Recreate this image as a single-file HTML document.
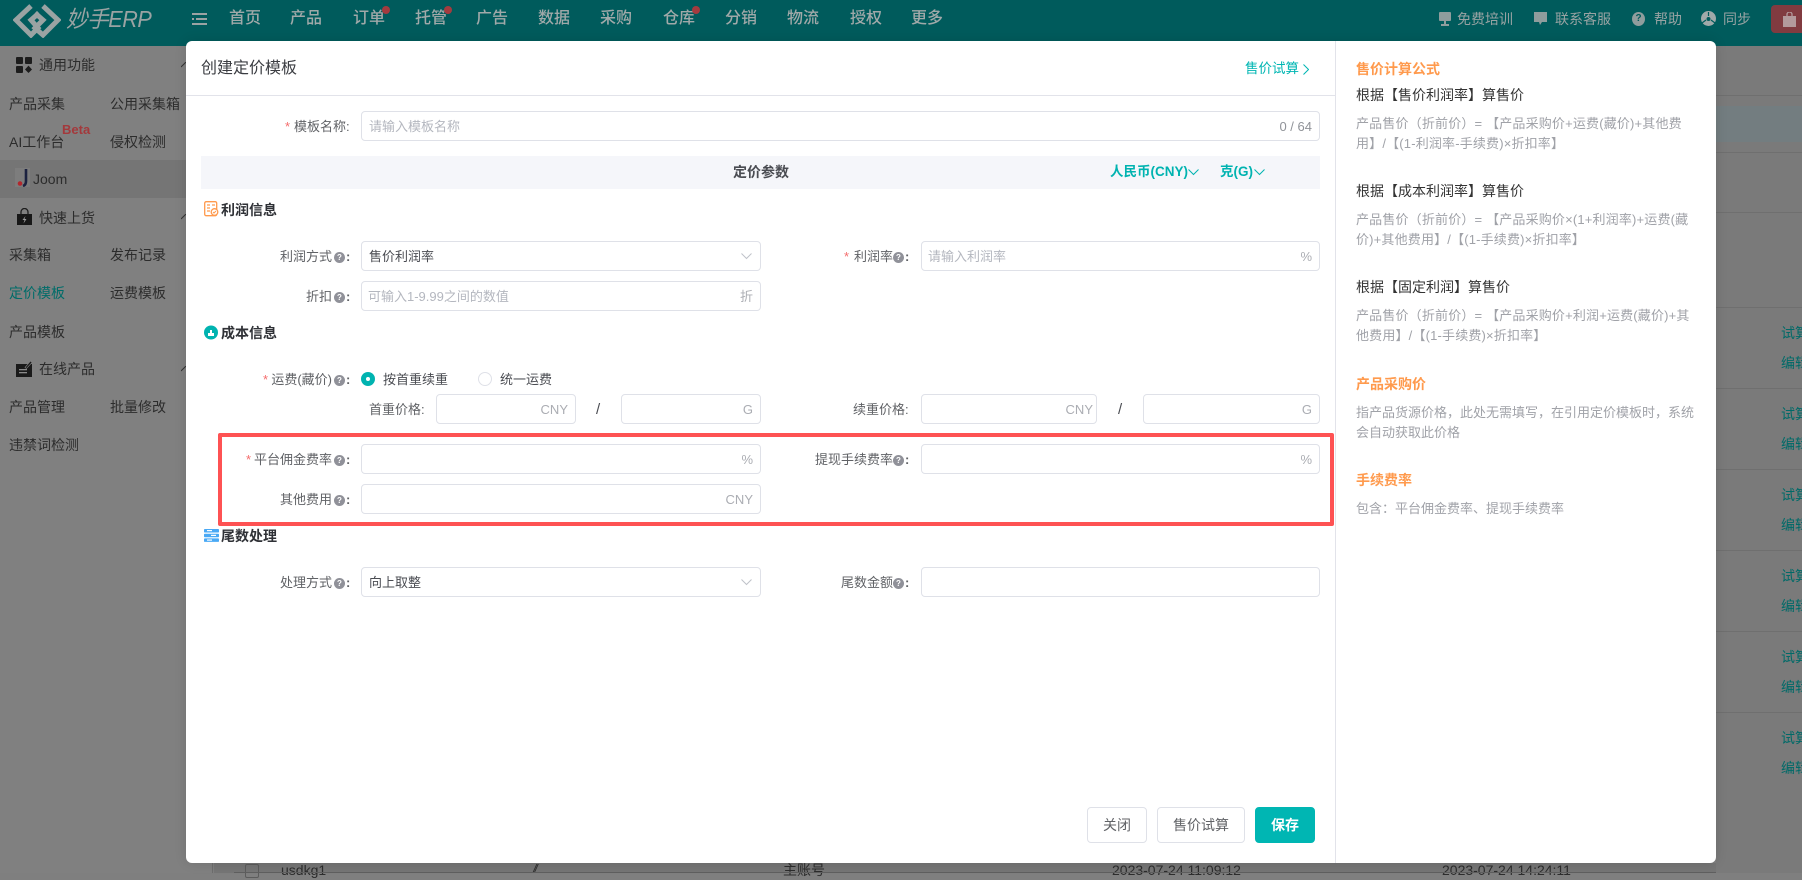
<!DOCTYPE html>
<html lang="zh-CN"><head><meta charset="utf-8"><title>创建定价模板</title>
<style>
*{box-sizing:border-box}
html,body{margin:0;padding:0}
body{width:1802px;height:873px;position:relative;overflow:hidden;background:#7f7f7f;font-family:"Liberation Sans","Noto Sans CJK SC",sans-serif;font-size:13px;color:#2b2b2b}
.a{position:absolute}
.t{position:absolute;white-space:nowrap;line-height:20px}
.nav{font-size:16px;font-weight:500;color:#a0a9a9;top:9px}
.top{font-size:14px;color:#98a3a3;top:9px}
.dot{position:absolute;width:8px;height:8px;border-radius:50%;background:#a33b3f;top:6px}
.s{font-size:14px;color:#2c2c2c}
.act{font-size:14px;color:#006a68;left:1781px}
.hl{position:absolute;height:1px;background:#6f6f6f;left:1716px;width:86px}
.lab{font-size:13px;color:#606266;margin-top:1px}
.q{position:absolute;width:11px;height:11px;border-radius:50%;background:#909199;color:#fff;font-size:8px;font-weight:bold;line-height:11px;text-align:center;margin-top:1px}
.c{position:absolute;font-size:13px;color:#606266;line-height:20px;margin-top:1px;font-weight:bold}
.star{position:absolute;color:#f56c6c;font-size:13px;line-height:20px;margin-top:1px}
.in{position:absolute;background:#fff;border:1px solid #dfe1e8;border-radius:4px;height:30px}
.ph{position:absolute;white-space:nowrap;font-size:13px;line-height:20px;color:#b4b7bf;margin-top:1px}
.su{position:absolute;white-space:nowrap;font-size:13px;line-height:20px;color:#abadb3;margin-top:1px}
.val{position:absolute;white-space:nowrap;font-size:13px;line-height:20px;color:#4a4c52;margin-top:1px}
.sec{position:absolute;font-size:14px;font-weight:bold;color:#2f3136;line-height:20px;left:221px;white-space:nowrap;margin-top:1px}
.h1{position:absolute;left:1356px;font-size:14px;font-weight:bold;color:#ff9a4d;line-height:20px;white-space:nowrap}
.h2{position:absolute;left:1356px;font-size:14px;color:#333;line-height:20px;white-space:nowrap}
.p{position:absolute;left:1356px;font-size:13px;color:#a0a2a8;line-height:20px;white-space:nowrap;margin-top:1px}
.f{letter-spacing:.17px}
.btn{position:absolute;top:807px;height:36px;border:1px solid #dfe1e8;border-radius:4px;background:#fff;color:#606266;font-size:14px;line-height:34px;text-align:center}
.sl{font-size:15px;color:#4a4c52}
</style></head>
<body>
<!-- top bar -->
<div class="a" style="left:0;top:0;width:1802px;height:46px;background:#005b5c"></div>
<svg class="a" style="left:13px;top:2px" width="48" height="36" viewBox="0 0 48 36" fill="none" stroke="#9aa3a3" stroke-width="5"><path d="M18 4 3 18l15 15 7-7-7-8 8-7M30 4l15 14-15 15-8-7 8-8-8-7"/></svg>
<div class="t" style="left:66px;top:5px;font-size:23px;line-height:28px;font-style:italic;color:#9aa3a3;letter-spacing:-.5px;transform:scaleX(.94);transform-origin:left center">妙手ERP</div>
<svg class="a" style="left:192px;top:13px" width="15" height="12" viewBox="0 0 15 12" fill="#9aa3a3"><rect width="15" height="2"/><rect y="5" x="4" width="11" height="2"/><rect y="10" width="15" height="2"/><rect y="5" width="2" height="2"/></svg>
<div class="t nav" style="left:229px">首页</div>
<div class="t nav" style="left:290px">产品</div>
<div class="t nav" style="left:353px">订单</div><div class="dot" style="left:382px"></div>
<div class="t nav" style="left:415px">托管</div><div class="dot" style="left:444px"></div>
<div class="t nav" style="left:476px">广告</div>
<div class="t nav" style="left:538px">数据</div>
<div class="t nav" style="left:600px">采购</div>
<div class="t nav" style="left:663px">仓库</div><div class="dot" style="left:692px"></div>
<div class="t nav" style="left:725px">分销</div>
<div class="t nav" style="left:787px">物流</div>
<div class="t nav" style="left:850px">授权</div>
<div class="t nav" style="left:911px">更多</div>
<svg class="a" style="left:1438px;top:12px" width="14" height="14" viewBox="0 0 14 14" fill="#8f9d9d"><rect x="1" y="0" width="12" height="9" rx="1"/><rect x="6" y="9" width="2" height="3"/><rect x="3" y="12" width="8" height="2"/></svg>
<div class="t top" style="left:1457px">免费培训</div>
<svg class="a" style="left:1533px;top:11px" width="15" height="15" viewBox="0 0 15 15" fill="#8f9d9d"><path d="M1 1h13v10H9l-2 3-1-3H1z"/></svg>
<div class="t top" style="left:1555px">联系客服</div>
<div class="a" style="left:1632px;top:12px;width:13px;height:14px;border-radius:50%;background:#8f9d9d;color:#005b5c;font-size:10px;font-weight:bold;text-align:center;line-height:14px">?</div>
<div class="t top" style="left:1654px">帮助</div>
<svg class="a" style="left:1701px;top:11px" width="15" height="15" viewBox="0 0 15 15"><circle cx="7.5" cy="7.5" r="7.5" fill="#a0a9a9"/><circle cx="7.5" cy="8" r="2" fill="#005b5c"/><path d="M1 12 5 9M14 12l-4-3M7.5 1v4" stroke="#005b5c" stroke-width="1.2"/></svg>
<div class="t top" style="left:1723px">同步</div>
<div class="a" style="left:1771px;top:5px;width:40px;height:28px;border-radius:4px;background:#813b40"></div>
<svg class="a" style="left:1783px;top:12px" width="13" height="15" viewBox="0 0 13 15"><rect y="4" width="13" height="11" fill="#b39a9c"/><path d="M4 5V2.5a2.5 2.5 0 0 1 5 0V5" fill="none" stroke="#b39a9c" stroke-width="1.3"/></svg>

<!-- sidebar -->
<div class="a" style="left:0;top:46px;width:213px;height:827px;background:#808080;border-right:1px solid #6d6d6d"></div>
<div class="a" style="left:0;top:160px;width:186px;height:38px;background:#757575"></div>
<svg class="a" style="left:16px;top:57px" width="16" height="16" viewBox="0 0 16 16" fill="#1d1d1d"><rect width="7" height="7" rx="1"/><rect x="9" width="7" height="7" rx="1"/><rect y="9" width="7" height="7" rx="1"/><path d="M12.5 8.6 16 12.5l-3.500 3.500-3.500-3.500z"/></svg>
<div class="t s" style="left:39px;top:55px">通用功能</div>
<div class="t s" style="left:9px;top:94px">产品采集</div>
<div class="t s" style="left:110px;top:94px">公用采集箱</div>
<div class="t s" style="left:9px;top:132px">AI工作台</div>
<div class="t" style="left:62px;top:120px;font-size:13px;font-weight:bold;color:#a3393c">Beta</div>
<div class="t s" style="left:110px;top:132px">侵权检测</div>
<svg class="a" style="left:15px;top:168px" width="15" height="19" viewBox="0 0 15 19"><rect width="15" height="19" fill="#7d7d7d"/><path d="M11 1v12q0 4-3 5" fill="none" stroke="#1c2240" stroke-width="2.600"/><circle cx="5" cy="15.500" r="2.300" fill="#b3272d"/></svg>
<div class="t s" style="left:33px;top:169px">Joom</div>
<svg class="a" style="left:17px;top:208px" width="15" height="17" viewBox="0 0 15 17"><rect y="6" width="15" height="11" fill="#181818"/><path d="M4 7V4a3.500 3.500 0 0 1 7 0v3" fill="none" stroke="#1d1d1d" stroke-width="1.300"/><path d="M8.500 8 5.500 12h2l-1 3.500 3-4.500h-2z" fill="#9a9a9a"/></svg>
<div class="t s" style="left:39px;top:208px">快速上货</div>
<div class="t s" style="left:9px;top:245px">采集箱</div>
<div class="t s" style="left:110px;top:245px">发布记录</div>
<div class="t s" style="left:9px;top:283px;color:#006c69">定价模板</div>
<div class="t s" style="left:110px;top:283px">运费模板</div>
<div class="t s" style="left:9px;top:322px">产品模板</div>
<svg class="a" style="left:16px;top:361px" width="16" height="16" viewBox="0 0 16 16"><path d="M0 3h10L7 7v2H0zM0 3h16v13H0z" fill="#1a1a1a"/><rect x="3" y="8" width="8" height="1.300" fill="#8a8a8a"/><rect x="3" y="11" width="8" height="1.300" fill="#8a8a8a"/><path d="M9 6.500 14.500 0 16 1.500 10.500 7.500z" fill="#1a1a1a" stroke="#808080" stroke-width=".6"/></svg>
<div class="t s" style="left:39px;top:359px">在线产品</div>
<div class="t s" style="left:9px;top:397px">产品管理</div>
<div class="t s" style="left:110px;top:397px">批量修改</div>
<div class="t s" style="left:9px;top:435px">违禁词检测</div>
<svg class="a" style="left:181px;top:62px" width="5" height="6"><path d="M0 5 5 0" stroke="#333" fill="none"/></svg>
<svg class="a" style="left:181px;top:214px" width="5" height="6"><path d="M0 5 5 0" stroke="#333" fill="none"/></svg>
<svg class="a" style="left:181px;top:366px" width="5" height="6"><path d="M0 5 5 0" stroke="#333" fill="none"/></svg>

<!-- background page right -->
<div class="a" style="left:1716px;top:46px;width:86px;height:827px;background:#7a7a7a"></div>
<div class="a" style="left:1716px;top:106px;width:86px;height:36px;background:#737d80"></div>
<div class="hl" style="top:95px"></div><div class="hl" style="top:152px"></div><div class="hl" style="top:212px"></div>
<div class="hl" style="top:307px"></div><div class="hl" style="top:388px"></div><div class="hl" style="top:469px"></div><div class="hl" style="top:550px"></div><div class="hl" style="top:631px"></div><div class="hl" style="top:712px"></div>
<div class="t act" style="top:323px">试算</div><div class="t act" style="top:353px">编辑</div>
<div class="t act" style="top:404px">试算</div><div class="t act" style="top:434px">编辑</div>
<div class="t act" style="top:485px">试算</div><div class="t act" style="top:515px">编辑</div>
<div class="t act" style="top:566px">试算</div><div class="t act" style="top:596px">编辑</div>
<div class="t act" style="top:647px">试算</div><div class="t act" style="top:677px">编辑</div>
<div class="t act" style="top:728px">试算</div><div class="t act" style="top:758px">编辑</div>

<!-- bottom strip -->
<div class="a" style="left:214px;top:863px;width:1502px;height:10px;background:#757575"></div>
<div class="a" style="left:245px;top:864px;width:14px;height:14px;border:1px solid #5c5c5c;border-radius:2px"></div>
<div class="t" style="left:281px;top:860px;font-size:14px;color:#2c2c2c">usdkg1</div>
<div class="t" style="left:533px;top:859px;font-size:12px;font-style:italic;letter-spacing:-2px;color:#2c2c2c">//</div>
<div class="t" style="left:783px;top:860px;font-size:14px;color:#2c2c2c">主账号</div>
<div class="t" style="left:1112px;top:860px;font-size:14px;color:#2c2c2c">2023-07-24 11:09:12</div>
<div class="t" style="left:1442px;top:860px;font-size:14px;color:#2c2c2c">2023-07-24 14:24:11</div>
<div class="a" style="left:234px;top:872px;width:1482px;height:1px;background:#5f5f5f"></div>

<!-- modal -->
<div class="a" style="left:186px;top:41px;width:1530px;height:822px;background:#fff;border-radius:6px;box-shadow:0 0 12px rgba(0,0,0,.12)"></div>
<div class="a" style="left:186px;top:95px;width:1149px;height:1px;background:#e2e3ea"></div>
<div class="a" style="left:1335px;top:41px;width:1px;height:822px;background:#e2e3ea"></div>
<div class="t" style="left:201px;top:59px;font-size:16px;color:#3b3d42">创建定价模板</div>
<div class="t" style="left:1245px;top:59px;font-size:13.500px;color:#00b6b3">售价试算</div>
<svg class="a" style="left:1303px;top:64px" width="6" height="11"><path d="M.5 .5l5 5-5 5" fill="none" stroke="#00b6b3"/></svg>

<!-- name row -->
<div class="star" style="left:285px;top:116px">*</div>
<div class="t lab" style="left:294px;top:116px">模板名称:</div>
<div class="in" style="left:361px;top:111px;width:959px"></div>
<div class="ph" style="left:369px;top:116px">请输入模板名称</div>
<div class="su" style="right:490px;top:116px;color:#909399">0 / 64</div>

<!-- band -->
<div class="a" style="left:201px;top:156px;width:1119px;height:33px;background:#f5f6fa"></div>
<div class="t" style="left:733px;top:162px;font-size:14px;font-weight:bold;color:#4a4c52">定价参数</div>
<div class="t" style="left:1110px;top:162px;font-size:13.500px;font-weight:bold;color:#00b3b0">人民币(CNY)</div>
<svg class="a" style="left:1188px;top:169px" width="11" height="7"><path d="M.5 .5 5.500 5.500 10.500 .5" fill="none" stroke="#00b3b0"/></svg>
<div class="t" style="left:1220px;top:162px;font-size:13.500px;font-weight:bold;color:#00b3b0">克(G)</div>
<svg class="a" style="left:1254px;top:169px" width="11" height="7"><path d="M.5 .5 5.500 5.500 10.500 .5" fill="none" stroke="#00b3b0"/></svg>

<!-- profit section -->
<svg class="a" style="left:204px;top:201px" width="15" height="16" viewBox="0 0 15 16" fill="none" stroke="#ff9a4d" stroke-width="1.300"><rect x=".7" y=".7" width="12" height="14" rx="1.500"/><path d="M3 4h3M8 4h3M3 7h3M3 10h3"/><circle cx="10.500" cy="11" r="3.300" fill="#fff"/><path d="M9 11l1 1 2-2" stroke-width="1"/></svg>
<div class="sec" style="top:199px">利润信息</div>

<div class="t lab" style="right:1470px;top:246px">利润方式</div><div class="q" style="left:334px;top:251px">?</div><div class="c" style="left:346px;top:246px">:</div>
<div class="in" style="left:361px;top:241px;width:400px"></div>
<div class="val" style="left:369px;top:246px">售价利润率</div>
<svg class="a" style="left:741px;top:253px" width="11" height="7"><path d="M.5 .5 5.500 5.500 10.500 .5" fill="none" stroke="#bfc2c9"/></svg>

<div class="star" style="left:844px;top:246px">*</div>
<div class="t lab" style="right:909px;top:246px">利润率</div><div class="q" style="left:893px;top:251px">?</div><div class="c" style="left:905px;top:246px">:</div>
<div class="in" style="left:921px;top:241px;width:399px"></div>
<div class="ph" style="left:928px;top:246px">请输入利润率</div>
<div class="su" style="right:490px;top:246px">%</div>

<div class="t lab" style="right:1470px;top:286px">折扣</div><div class="q" style="left:334px;top:291px">?</div><div class="c" style="left:346px;top:286px">:</div>
<div class="in" style="left:361px;top:281px;width:400px"></div>
<div class="ph" style="left:368px;top:286px">可输入1-9.99之间的数值</div>
<div class="su" style="right:1049px;top:286px">折</div>

<!-- cost section -->
<svg class="a" style="left:204px;top:325px" width="14" height="15" viewBox="0 0 14 15"><circle cx="7" cy="7.500" r="7" fill="#00b3b0"/><path d="M4 11V8h2V5h2v3h2v3z" fill="#fff"/></svg>
<div class="sec" style="top:322px">成本信息</div>

<div class="star" style="left:263px;top:369px">*</div>
<div class="t lab" style="right:1470px;top:369px">运费(藏价)</div><div class="q" style="left:334px;top:374px">?</div><div class="c" style="left:346px;top:369px">:</div>
<div class="a" style="left:361px;top:372px;width:14px;height:14px;border-radius:50%;background:#00b3b0"></div>
<div class="a" style="left:366px;top:377px;width:4px;height:4px;border-radius:50%;background:#fff"></div>
<div class="t" style="left:383px;top:370px;color:#4a4c52">按首重续重</div>
<div class="a" style="left:478px;top:372px;width:14px;height:14px;border-radius:50%;border:1px solid #dfe1e8;background:#fff"></div>
<div class="t" style="left:500px;top:370px;color:#4a4c52">统一运费</div>

<div class="t lab" style="left:369px;top:399px">首重价格:</div>
<div class="in" style="left:436px;top:394px;width:140px"></div><div class="su" style="right:1234px;top:399px">CNY</div>
<div class="t sl" style="left:596px;top:400px">/</div>
<div class="in" style="left:621px;top:394px;width:140px"></div><div class="su" style="right:1049px;top:399px">G</div>

<div class="t lab" style="left:853px;top:399px">续重价格:</div>
<div class="in" style="left:921px;top:394px;width:176px"></div><div class="su" style="right:709px;top:399px">CNY</div>
<div class="t sl" style="left:1118px;top:400px">/</div>
<div class="in" style="left:1143px;top:394px;width:177px"></div><div class="su" style="right:490px;top:399px">G</div>

<!-- red box -->
<div class="a" style="left:218px;top:433px;width:1116px;height:93px;border:4px solid #fe5253;border-radius:2px"></div>

<div class="star" style="left:246px;top:449px">*</div>
<div class="t lab" style="right:1470px;top:449px">平台佣金费率</div><div class="q" style="left:334px;top:454px">?</div><div class="c" style="left:346px;top:449px">:</div>
<div class="in" style="left:361px;top:444px;width:400px"></div><div class="su" style="right:1049px;top:449px">%</div>

<div class="t lab" style="right:909px;top:449px">提现手续费率</div><div class="q" style="left:893px;top:454px">?</div><div class="c" style="left:905px;top:449px">:</div>
<div class="in" style="left:921px;top:444px;width:399px"></div><div class="su" style="right:490px;top:449px">%</div>

<div class="t lab" style="right:1470px;top:489px">其他费用</div><div class="q" style="left:334px;top:494px">?</div><div class="c" style="left:346px;top:489px">:</div>
<div class="in" style="left:361px;top:484px;width:400px"></div><div class="su" style="right:1049px;top:489px">CNY</div>

<!-- tail section -->
<svg class="a" style="left:204px;top:529px" width="15" height="13" viewBox="0 0 15 13" fill="#4aa9f5"><rect width="15" height="3.500" rx=".8"/><rect y="4.700" width="15" height="3.500" rx=".8"/><rect y="9.400" width="15" height="3.500" rx=".8"/><rect x="3" y="1" width="5" height="1.200" fill="#fff"/><rect x="7" y="5.800" width="5" height="1.200" fill="#fff"/><rect x="3" y="10.500" width="5" height="1.200" fill="#fff"/></svg>
<div class="sec" style="top:525px">尾数处理</div>

<div class="t lab" style="right:1470px;top:572px">处理方式</div><div class="q" style="left:334px;top:577px">?</div><div class="c" style="left:346px;top:572px">:</div>
<div class="in" style="left:361px;top:567px;width:400px"></div>
<div class="val" style="left:369px;top:572px">向上取整</div>
<svg class="a" style="left:741px;top:579px" width="11" height="7"><path d="M.5 .5 5.500 5.500 10.500 .5" fill="none" stroke="#bfc2c9"/></svg>

<div class="t lab" style="right:909px;top:572px">尾数金额</div><div class="q" style="left:893px;top:577px">?</div><div class="c" style="left:905px;top:572px">:</div>
<div class="in" style="left:921px;top:567px;width:399px"></div>

<!-- buttons -->
<div class="btn" style="left:1087px;width:60px">关闭</div>
<div class="btn" style="left:1157px;width:88px">售价试算</div>
<div class="btn" style="left:1255px;width:60px;background:#00b6b3;border-color:#00b6b3;color:#fff;font-weight:bold">保存</div>

<!-- right panel -->
<div class="h1" style="top:59px">售价计算公式</div>
<div class="h2" style="top:85px">根据【售价利润率】算售价</div>
<div class="p f" style="top:113px">产品售价（折前价）= 【产品采购价+运费(藏价)+其他费<br>用】/【(1-利润率-手续费)×折扣率】</div>
<div class="h2" style="top:181px">根据【成本利润率】算售价</div>
<div class="p f" style="top:209px">产品售价（折前价）= 【产品采购价×(1+利润率)+运费(藏<br>价)+其他费用】/【(1-手续费)×折扣率】</div>
<div class="h2" style="top:277px">根据【固定利润】算售价</div>
<div class="p f" style="top:305px">产品售价（折前价）= 【产品采购价+利润+运费(藏价)+其<br>他费用】/【(1-手续费)×折扣率】</div>
<div class="h1" style="top:374px">产品采购价</div>
<div class="p" style="top:402px">指产品货源价格，此处无需填写，在引用定价模板时，系统<br>会自动获取此价格</div>
<div class="h1" style="top:470px">手续费率</div>
<div class="p" style="top:498px">包含：平台佣金费率、提现手续费率</div>
</body></html>
